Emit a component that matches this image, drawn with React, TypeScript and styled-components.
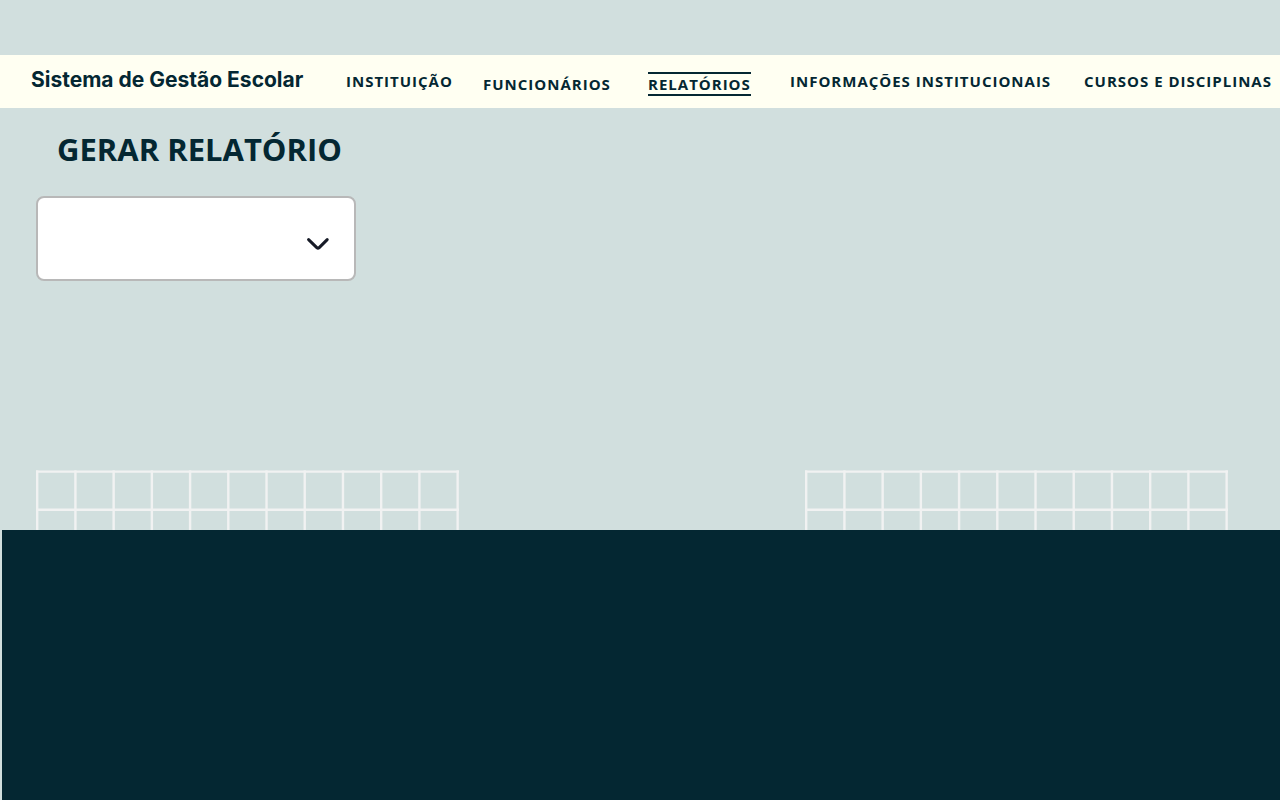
import React from "react";
import styled, { createGlobalStyle } from "styled-components";

const ink = "#042732";
const mist = "#d1dfde";
const cream = "#fffff2";

const GlobalStyle = createGlobalStyle`
  *, *::before, *::after { box-sizing: border-box; }
  body {
    margin: 0;
    background: ${mist};
    color: ${ink};
    font-family: "Open Sans", "Noto Sans", sans-serif;
  }
`;

const Page = styled.div`
  display: flex;
  flex-direction: column;
  min-height: 100vh;
  padding-top: 55px;
  overflow-x: hidden;
`;

const Header = styled.header`
  display: flex;
  align-items: flex-start;
  padding: 12px 12px 12px 31px;
  background: ${cream};
`;

const Brand = styled.a`
  flex: none;
  width: 315px;
  color: inherit;
  font-family: Inter, "Liberation Sans", sans-serif;
  font-size: 21px;
  font-weight: 700;
  line-height: 26px;
  text-decoration: none;
  white-space: nowrap;
`;

const Nav = styled.nav`
  flex: 1;
  padding-top: 4px;
`;

const NavList = styled.ul`
  display: grid;
  grid-template-columns: 137fr 165fr 142fr 294fr 184fr;
  min-height: 25px;
  margin: 0;
  padding: 0;
  list-style: none;
`;

const NavItem = styled.li<{ $align?: "start" | "center" | "end" }>`
  display: flex;
  align-items: ${({ $align }) => $align ?? "start"};
  min-width: 0;
`;

const NavLink = styled.a<{ $active?: boolean }>`
  border: solid ${ink};
  border-width: ${({ $active }) => ($active ? "2px 0" : "0")};
  color: inherit;
  font-size: 15px;
  font-weight: 700;
  line-height: 20px;
  letter-spacing: 1px;
  text-decoration: none;
  white-space: nowrap;
`;

const Main = styled.main`
  padding: 20px 36px 0;
`;

const Title = styled.h1`
  margin: 0 0 26px;
  padding-left: 21px;
  font-size: 31px;
  font-weight: 700;
  line-height: 42px;
`;

const SelectBox = styled.div`
  display: grid;
  align-items: center;
  width: 320px;
  max-width: 100%;

  > * { grid-area: 1 / 1; }
`;

const Select = styled.select`
  appearance: none;
  width: 100%;
  height: 85px;
  padding: 0 64px 0 20px;
  border: 2px solid #b8b8b8;
  border-radius: 8px;
  background: #fff;
  color: inherit;
  font: inherit;
`;

const Chevron = styled.svg`
  justify-self: end;
  width: 24px;
  height: 14px;
  margin: 10px 26px 0 0;
  pointer-events: none;
`;

const Decoration = styled.div`
  display: flex;
  justify-content: space-between;
  margin-top: 189px;
  padding: 0 52px 0 36px;
`;

const GridArt = styled.svg`
  display: block;
  width: 423px;
  height: 60px;
`;

const Footer = styled.footer`
  flex: 1;
  min-height: 240px;
  margin-left: 2px;
  background: ${ink};
`;

const links: { label: string; align?: "start" | "center" | "end"; active?: boolean }[] = [
  { label: "INSTITUIÇÃO" },
  { label: "FUNCIONÁRIOS", align: "center" },
  { label: "RELATÓRIOS", align: "end", active: true },
  { label: "INFORMAÇÕES INSTITUCIONAIS" },
  { label: "CURSOS E DISCIPLINAS" },
];

function Lattice() {
  const columns = Array.from({ length: 12 }, (_, i) => 1.2 + i * 38.22);
  return (
    <GridArt viewBox="0 0 423 60" fill="none" stroke="#f1f2f2" strokeWidth="2.4" aria-hidden="true">
      {columns.map((x) => (
        <path key={x} d={`M${x} 0.4V60`} />
      ))}
      <path d="M0 1.6H423M0 39.8H423" />
    </GridArt>
  );
}

export default function App() {
  return (
    <>
      <GlobalStyle />
      <Page>
        <Header>
          <Brand href="#">Sistema de Gestão Escolar</Brand>
          <Nav aria-label="Principal">
            <NavList>
              {links.map(({ label, align, active }) => (
                <NavItem key={label} $align={align}>
                  <NavLink href="#" $active={active} aria-current={active ? "page" : undefined}>
                    {label}
                  </NavLink>
                </NavItem>
              ))}
            </NavList>
          </Nav>
        </Header>
        <Main>
          <Title>
            <label htmlFor="relatorio">GERAR RELATÓRIO</label>
          </Title>
          <SelectBox>
            <Select id="relatorio" defaultValue="">
              <option value="" />
            </Select>
            <Chevron viewBox="0 0 24 14" fill="none" stroke="#161a26" strokeWidth="3" strokeLinecap="round" strokeLinejoin="round" aria-hidden="true">
              <path d="M2.6 2.6L10.8 10.6Q12 11.6 13.2 10.6L21.2 2.6" />
            </Chevron>
          </SelectBox>
        </Main>
        <Decoration>
          <Lattice />
          <Lattice />
        </Decoration>
        <Footer />
      </Page>
    </>
  );
}
